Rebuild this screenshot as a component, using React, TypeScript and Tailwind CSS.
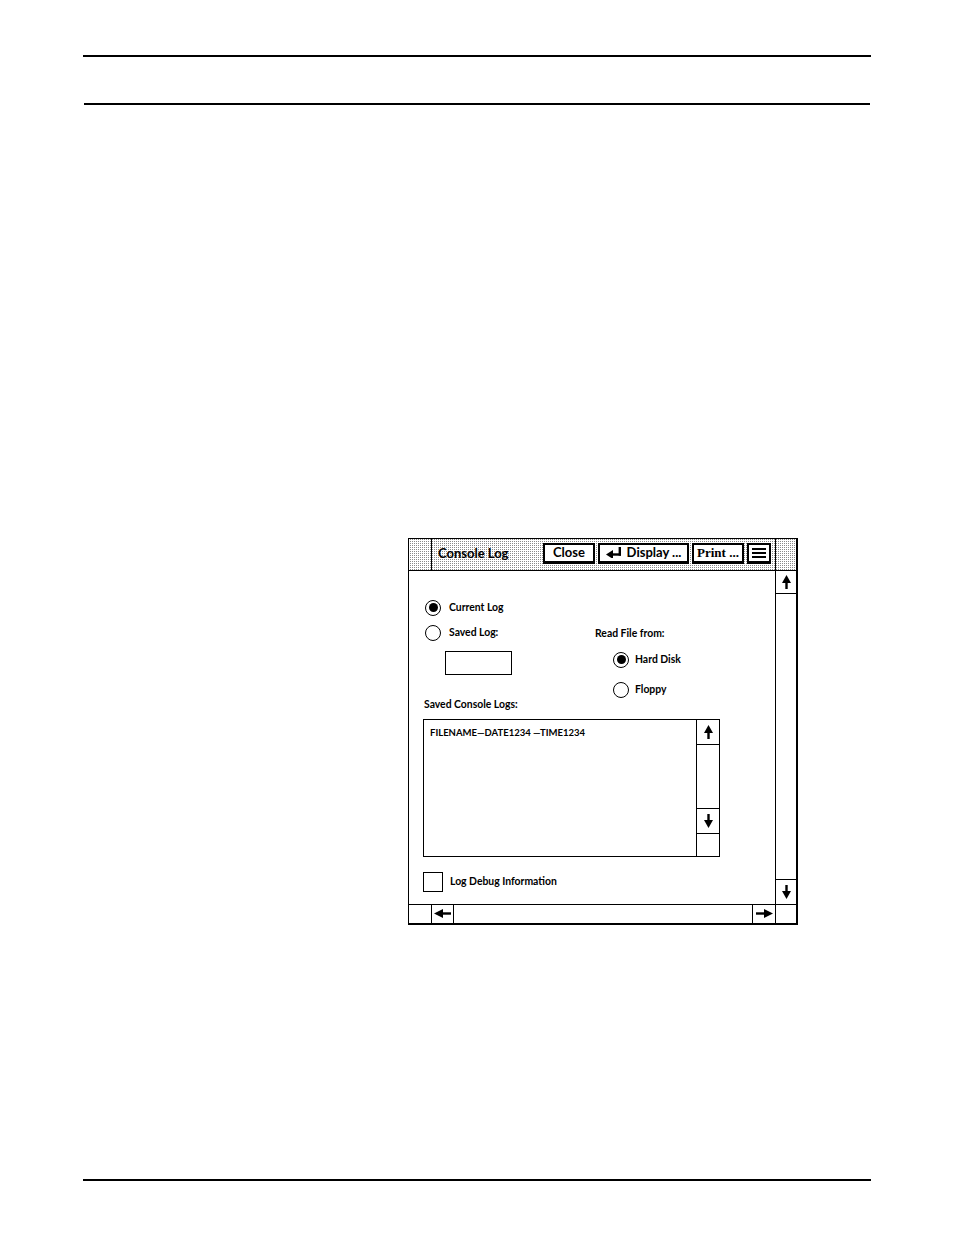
import React from "react";

const stipple = "bg-[conic-gradient(#8a8a8a_0_25%,#fff_0)] bg-[length:2px_2px]";

function UpArrow() {
  return (
    <svg width="9" height="14" viewBox="0 0 9 14">
      <polygon points="4.5,0 9,8 0,8" fill="#000" />
      <rect x="3.3" y="6" width="2.4" height="8" fill="#000" />
    </svg>
  );
}
function DownArrow() {
  return (
    <svg width="9" height="14" viewBox="0 0 9 14">
      <polygon points="4.5,14 9,6 0,6" fill="#000" />
      <rect x="3.3" y="0" width="2.4" height="8" fill="#000" />
    </svg>
  );
}
function LeftArrow() {
  return (
    <svg width="17" height="9" viewBox="0 0 17 9">
      <polygon points="0,4.5 9,0 9,9" fill="#000" />
      <rect x="7" y="3.3" width="10" height="2.4" fill="#000" />
    </svg>
  );
}
function RightArrow() {
  return (
    <svg width="17" height="9" viewBox="0 0 17 9">
      <polygon points="17,4.5 8,0 8,9" fill="#000" />
      <rect x="0" y="3.3" width="10" height="2.4" fill="#000" />
    </svg>
  );
}
function ReturnArrow() {
  return (
    <svg width="16" height="11" viewBox="0 0 16 11">
      <polygon points="0,7.5 7,3 7,12" fill="#000" />
      <rect x="5" y="6.3" width="10" height="2.4" fill="#000" />
      <rect x="12.6" y="0" width="2.4" height="8.7" fill="#000" />
    </svg>
  );
}

function Radio({ checked }: { checked?: boolean }) {
  return (
    <div className="w-[16px] h-[16px] rounded-full border-[1.5px] border-black flex items-center justify-center shrink-0">
      {checked && <div className="w-[9px] h-[9px] rounded-full bg-black" />}
    </div>
  );
}

export default function App() {
  return (
    <div className="w-[954px] h-[1235px] bg-white flex flex-col font-['Lato',sans-serif] text-black">
      <div className="mt-[55px] ml-[83px] w-[788px] h-[2px] bg-black" />
      <div className="mt-[46px] ml-[84px] w-[786px] h-[1.5px] bg-black" />

      {/* Window */}
      <div className="mt-[433px] ml-[408px] w-[390px] h-[387px] border border-black border-r-2 border-b-2 flex flex-col">
        {/* Title bar */}
        <div className={`h-[32px] border-b border-black flex ${stipple}`}>
          <div className="w-[23px] border-r border-black" />
          <div className="flex-1 flex items-center">
            <span className="ml-[6px] -mt-[2px] text-[13px] font-bold leading-none">Console Log</span>
            <div className="ml-auto mr-[4px] -mt-[2px] flex items-center gap-[3px]">
              <div className="w-[52px] h-[21px] bg-white border-2 border-black border-b-[3px] flex items-center justify-center text-[13px] font-bold leading-none">
                Close
              </div>
              <div className="w-[91px] h-[21px] bg-white border-2 border-black border-b-[3px] flex items-center justify-center gap-[5px] text-[13px] font-bold leading-none">
                <ReturnArrow />
                <span>Display ...</span>
              </div>
              <div className="w-[52px] h-[21px] bg-white border-2 border-black border-b-[3px] flex items-center justify-center text-[13px] font-bold leading-none font-['Liberation_Serif',serif]">
                Print ...
              </div>
              <div className="w-[24px] h-[21px] bg-white border-2 border-black border-b-[3px] flex flex-col items-center justify-center gap-[2px]">
                <div className="w-[14px] h-[2px] bg-black" />
                <div className="w-[14px] h-[2px] bg-black" />
                <div className="w-[14px] h-[2px] bg-black" />
              </div>
            </div>
          </div>
          <div className="w-[21px] border-l border-black" />
        </div>

        {/* Body */}
        <div className="flex-1 flex">
          <div className="flex-1 flex flex-col pl-[14px]">
            <div className="flex">
              <div className="w-[170px] flex flex-col">
                <div className="mt-[29px] h-[16px] flex items-center gap-[8px] ml-[2px]">
                  <Radio checked />
                  <span className="text-[10.4px] font-bold leading-none">Current Log</span>
                </div>
                <div className="mt-[9px] h-[16px] flex items-center gap-[8px] ml-[2px]">
                  <Radio />
                  <span className="text-[10.4px] font-bold leading-none">Saved Log:</span>
                </div>
                <div className="mt-[10px] ml-[22px] w-[67px] h-[24px] border-[1.5px] border-black" />
                <div className="mt-[24px] h-[12px] flex items-center ml-[1px] text-[10.4px] font-bold leading-none">
                  Saved Console Logs:
                </div>
              </div>
              <div className="ml-[2px] flex flex-col">
                <div className="mt-[57px] h-[12px] flex items-center text-[10.4px] font-bold leading-none">
                  Read File from:
                </div>
                <div className="mt-[12px] ml-[18px] h-[16px] flex items-center gap-[6px]">
                  <Radio checked />
                  <span className="text-[10.4px] font-bold leading-none">Hard Disk</span>
                </div>
                <div className="mt-[14px] ml-[18px] h-[16px] flex items-center gap-[6px]">
                  <Radio />
                  <span className="text-[10.4px] font-bold leading-none">Floppy</span>
                </div>
              </div>
            </div>

            {/* list box */}
            <div className="mt-[8px] w-[297px] h-[138px] border-[1.5px] border-black flex">
              <div className="flex-1 pl-[6px] pt-[8px] text-[9.5px] font-bold leading-none whitespace-nowrap">
                FILENAME—DATE1234 —TIME1234
              </div>
              <div className="w-[23px] border-l border-black flex flex-col">
                <div className="h-[25px] border-b border-black flex items-center justify-center">
                  <UpArrow />
                </div>
                <div className="flex-1" />
                <div className="h-[26px] border-t border-b border-black flex items-center justify-center">
                  <DownArrow />
                </div>
                <div className="h-[22px]" />
              </div>
            </div>

            <div className="mt-[15px] flex items-center gap-[7px]">
              <div className="w-[20px] h-[20px] border-[1.5px] border-black" />
              <span className="text-[10.4px] font-bold leading-none">Log Debug Information</span>
            </div>
          </div>

          {/* vertical scrollbar */}
          <div className="w-[21px] border-l border-black flex flex-col">
            <div className="h-[23px] border-b border-black flex items-center justify-center">
              <UpArrow />
            </div>
            <div className="flex-1" />
            <div className="h-[25px] border-t border-black flex items-center justify-center">
              <DownArrow />
            </div>
          </div>
        </div>

        {/* horizontal scrollbar */}
        <div className="h-[19px] border-t border-black flex">
          <div className="w-[23px] border-r border-black" />
          <div className="w-[22px] border-r border-black flex items-center justify-center">
            <LeftArrow />
          </div>
          <div className="flex-1" />
          <div className="w-[23px] border-l border-black flex items-center justify-center">
            <RightArrow />
          </div>
          <div className="w-[21px] border-l border-black" />
        </div>
      </div>

      <div className="mt-[254px] ml-[83px] w-[788px] h-[2px] bg-black" />
    </div>
  );
}
